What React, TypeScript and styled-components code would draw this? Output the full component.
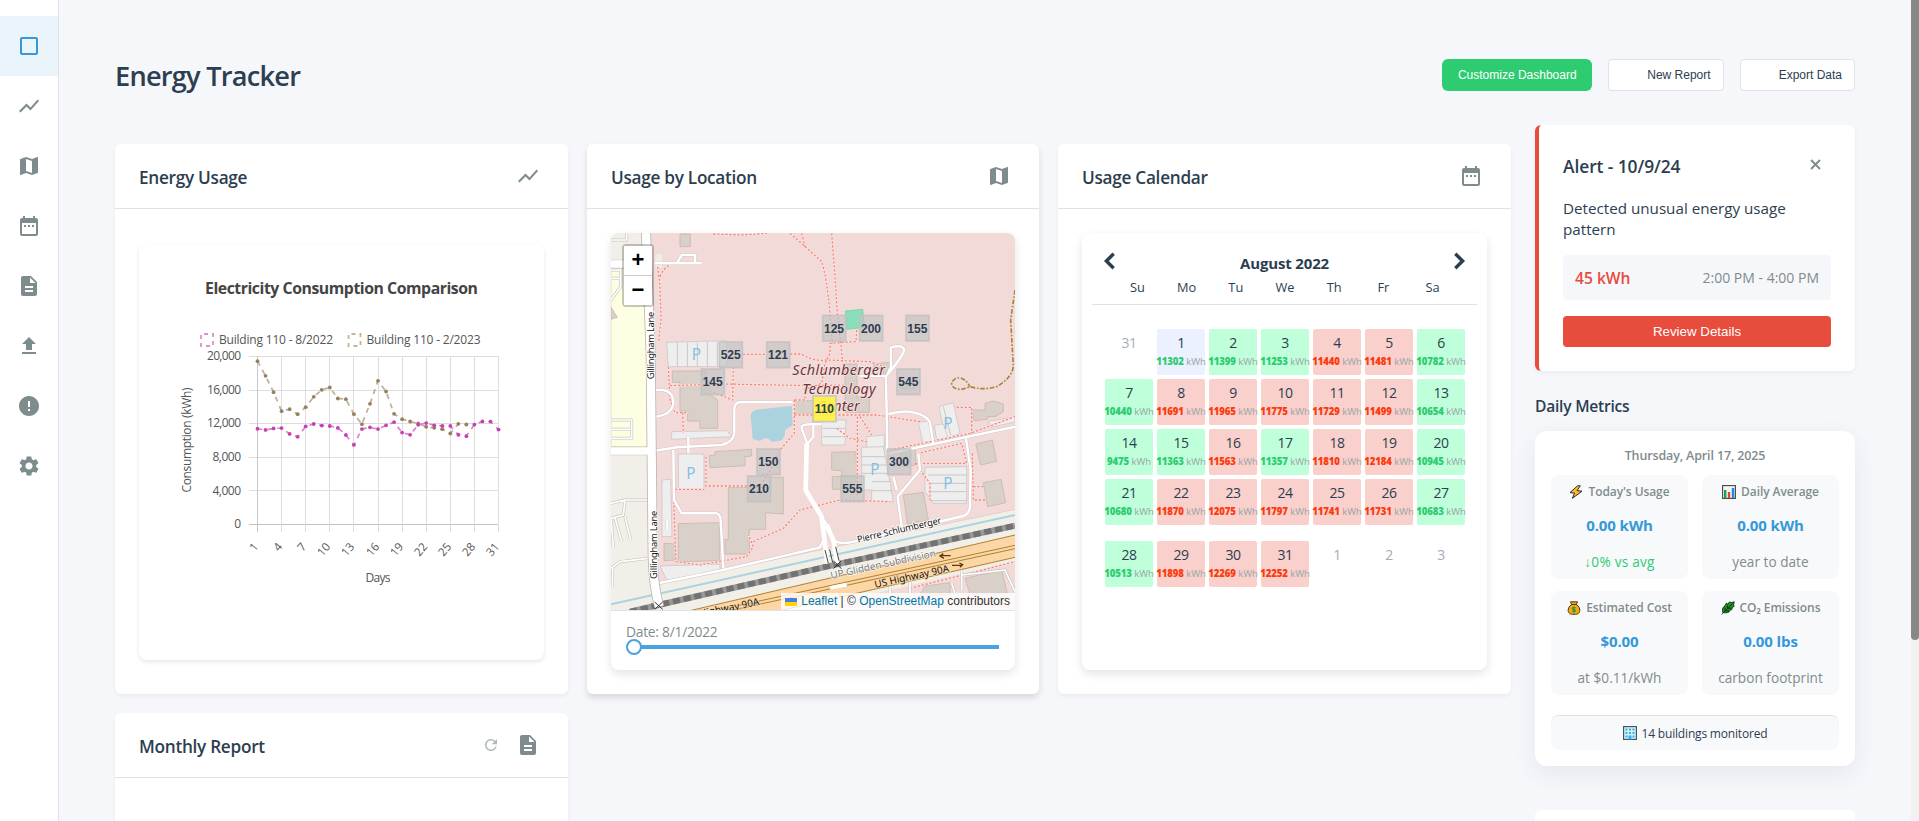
import React from "react";
import styled, { createGlobalStyle, css } from "styled-components";
import {
  MdCheckBoxOutlineBlank, MdShowChart, MdMap, MdDateRange, MdDescription,
  MdUpload, MdError, MdSettings, MdRefresh,
} from "react-icons/md";

const ui = '"Open Sans", "Noto Sans", sans-serif';
const arial = '"Liberation Sans", Arial, sans-serif';
const ink = "#2c3e50";
const muted = "#7f8c8d";
const line = "#dfe2e8";

const GlobalStyle = createGlobalStyle`
  * { box-sizing: border-box; }
  html, body { margin: 0; height: 821px; overflow: hidden; }
  body { background: #f5f7fb; font-family: ${ui}; color: ${ink}; }
  h1, h2, h3, p { margin: 0; }
  button { font-family: ${arial}; }
`;

const Page = styled.div`
  display: grid;
  grid-template-columns: 59px 1fr 8px;
  height: 821px;
  overflow: hidden;
`;

const Sidebar = styled.nav`
  background: #fff;
  border-right: 1px solid #dbe2ea;
  padding-top: 16px;
`;

const NavItem = styled.a<{ $active?: boolean }>`
  display: flex;
  align-items: center;
  justify-content: center;
  height: 60px;
  color: ${(p) => (p.$active ? "#3498db" : muted)};
  background: ${(p) => (p.$active ? "#e9f4fb" : "transparent")};
`;

const ScrollTrack = styled.div`
  background: #f1f1f1;
`;
const ScrollThumb = styled.div`
  height: 640px;
  background: #888;
  border-radius: 0 0 4px 4px;
`;

const Main = styled.main`
  padding: 59px 56px 0 56px;
  height: 821px;
  overflow: hidden;
`;

const TopBar = styled.header`
  display: flex;
  align-items: center;
  justify-content: space-between;
  height: 32px;
  margin-bottom: 34px;
`;
const PageTitle = styled.h1`
  padding-top: 2px;
  font-size: 27.2px;
  font-weight: 600;
  line-height: 38px;
  letter-spacing: -0.76px;
`;
const Actions = styled.div`
  display: flex;
  gap: 16px;
`;
const ActionButton = styled.button<{ $primary?: boolean }>`
  height: 32px;
  font-size: 12px;
  border-radius: 4px;
  white-space: nowrap;
  ${(p) =>
    p.$primary
      ? css`width: 150px; padding: 0; border: 0; border-radius: 6px; background: #2ecc71; color: #fff;`
      : css`padding: 0 12px 0 38px; border: 1px solid ${line}; background: #fff; color: ${ink};`}
`;

const Columns = styled.div`
  display: flex;
  gap: 24px;
`;
const CardGrid = styled.section`
  display: grid;
  grid-template-columns: 453px 452px 453px;
  grid-auto-rows: 550px;
  gap: 19px;
  padding-top: 19px;
`;
const Card = styled.article<{ $raised?: boolean }>`
  display: flex;
  flex-direction: column;
  background: #fff;
  border-radius: 6px;
  box-shadow: ${(p) => (p.$raised ? "0 4px 6px rgba(0,0,0,.12)" : "0 2px 4px rgba(0,0,0,.05)")};
`;
const CardHeader = styled.header`
  display: flex;
  align-items: center;
  height: 65px;
  padding: 0 28px 0 24px;
  border-bottom: 1px solid ${line};
`;
const CardTitle = styled.h2`
  flex: 1;
  padding-top: 3px;
  font-size: 17.2px;
  font-weight: 600;
  line-height: 24px;
  letter-spacing: -0.28px;
`;
const HeaderIcons = styled.div`
  display: flex;
  align-items: center;
  gap: 16px;
  color: ${muted};
  & svg:first-child:not(:last-child) { opacity: 0.6; }
`;
const CardBody = styled.div`
  flex: 1;
  display: flex;
  padding: 24px;
`;
const Panel = styled.div<{ $inset?: boolean }>`
  flex: 1;
  display: flex;
  flex-direction: column;
  overflow: hidden;
  margin: ${(p) => (p.$inset ? "11px 0 10px" : "0")};
  border-radius: 8px;
  background: #fff;
  box-shadow: ${(p) => (p.$inset ? "0 2px 4px rgba(0,0,0,.1)" : "0 4px 10px rgba(0,0,0,.11)")};
`;

/* ---------- Chart ---------- */

const year22 = [11399, 11253, 11440, 11481, 10782, 10440, 11691, 11965, 11775, 11729, 11499, 10654, 9475, 11363, 11563, 11357, 11810, 12184, 10945, 10680, 11870, 12075, 11797, 11741, 11731, 10683, 10513, 11898, 12269, 12252, 11302];
const year23 = [19444, 17700, 15754, 13492, 13730, 13135, 13968, 15198, 16032, 16310, 15000, 14921, 13135, 11944, 14365, 17103, 15833, 13175, 12540, 12262, 12024, 11627, 11508, 11349, 10833, 11984, 11905];

const ChartSvg = styled.svg`
  display: block;
  font-family: ${ui};
  font-size: 12px;
  fill: #555;
`;
const px = (i: number) => 118.5 + i * 8.034;
const py = (v: number) => 280.5 - (v / 20000) * 168;

function Series({ data, dot, stroke }: { data: number[]; dot: string; stroke: string }) {
  return (
    <g>
      <polyline points={data.map((v, i) => `${px(i)},${py(v)}`).join(" ")} fill="none" stroke={stroke} strokeWidth={1.7} strokeDasharray="5 5" />
      {data.map((v, i) => <circle key={i} cx={px(i)} cy={py(v)} r={1.9} fill={dot} />)}
    </g>
  );
}

function Chart() {
  return (
    <ChartSvg width="405" height="416" viewBox="0 0 405 416">
      <text x="202.5" y="50" textAnchor="middle" fontSize="15.8" fontWeight="700" fill="#444" textLength="273">Electricity Consumption Comparison</text>
      <rect x="62" y="90" width="12" height="12" fill="none" stroke="#dd8fd0" strokeWidth="1.8" strokeDasharray="4 4" strokeDashoffset="-3" />
      <text x="80" y="99.7" textLength="114">Building 110 - 8/2022</text>
      <rect x="209.5" y="90" width="12" height="12" fill="none" stroke="#c4b49a" strokeWidth="1.8" strokeDasharray="4 4" strokeDashoffset="-3" />
      <text x="227.5" y="99.7" textLength="114">Building 110 - 2/2023</text>
      {[0, 4000, 8000, 12000, 16000, 20000].map((v) => (
        <g key={v}>
          <line x1="110" x2="360" y1={Math.floor(py(v)) + 0.5} y2={Math.floor(py(v)) + 0.5} stroke={v ? "#dedede" : "#c4c4c4"} />
          <text x="102" y={py(v) + 3.6} textAnchor="end" textLength={v === 0 ? 6.5 : v < 9000 ? 28.5 : 34}>{v.toLocaleString("en-US")}</text>
        </g>
      ))}
      {[1, 4, 7, 10, 13, 16, 19, 22, 25, 28, 31].map((d) => {
        const x = Math.floor(px(d - 1)) + 0.5;
        return (
          <g key={d}>
            <line x1={x} x2={x} y1="112" y2="288" stroke={d === 1 ? "#c8c8c8" : "#dedede"} />
            <text transform={`translate(${x + 1.5} 303) rotate(-50)`} textAnchor="end" fontSize="11.5">{d}</text>
          </g>
        );
      })}
      <Series data={year23} dot="#96805f" stroke="#bfae96" />
      <Series data={year22} dot="#c540b2" stroke="#d983cb" />
      <text x="239" y="338" textAnchor="middle" textLength="25">Days</text>
      <text transform="translate(52 196) rotate(-90)" textAnchor="middle" textLength="105">Consumption (kWh)</text>
    </ChartSvg>
  );
}

/* ---------- Map ---------- */

const MapArea = styled.div`
  position: relative;
  height: 377px;
`;
const MapSvg = styled.svg`
  display: block;
  width: 100%;
  height: 377px;
  font-family: "Noto Sans", sans-serif;
`;
const ZoomControl = styled.div`
  position: absolute;
  left: 11px;
  top: 11px;
  width: 32px;
  border: 2px solid rgba(0, 0, 0, 0.22);
  border-radius: 4px;
  background-clip: padding-box;
`;
const ZoomButton = styled.div`
  height: 29px;
  background: #fff;
  color: #000;
  font: bold 22px/27px ${arial};
  text-align: center;
  & + & { height: 30px; border-top: 1px solid #ccc; }
`;
const Attribution = styled.div`
  position: absolute;
  right: 0;
  bottom: 0;
  display: flex;
  align-items: center;
  height: 17px;
  padding: 0 5px 0 4px;
  background: rgba(255, 255, 255, 0.8);
  font: 12px/17px ${arial};
  color: #333;
  white-space: pre;
  & a { color: #0078a8; }
  & svg { margin-right: 4px; }
`;

const buildings = [
  "240,42 271,42 271,80 240,80",
  "217,453 317,453 317,485 330,485 330,525 353,540 353,625 300,625 300,603 263,603 263,573 240,573 240,487 217,487",
  "585,542 640,542 640,583 585,583",
  "735,432 771,432 771,532 808,532 808,577 735,577",
  "822,432 868,427 868,450 852,465 848,446 822,444",
  "905,487 945,487 945,507 905,507",
  "1117,570 1155,570 1155,550 1180,543 1210,552 1210,575 1185,590 1162,590 1162,598 1122,602",
  "1127,672 1177,660 1190,724 1142,735",
  "33,262 52,292 33,298",
  "345,695 455,688 455,708 435,710 435,737 330,743 328,707 345,705",
  "385,802 510,802 510,772 550,772 550,882 497,878 497,928 448,928 448,1002 375,1002 375,958 385,958",
  "235,911 358,908 358,1022 235,1025",
  "192,970 225,972 225,1020 192,1022",
  "695,697 768,695 772,808 697,808 697,770 725,768 725,752 695,750",
  "910,825 970,817 985,900 922,912",
  "1150,788 1203,778 1217,848 1163,860",
  "900,690 945,688 948,735 910,740",
  "975,1098 1050,1088 1050,1125 960,1125",
  "1095,1075 1205,1050 1222,1120 1110,1122",
];
const parkings = [
  "200,367 380,362 380,440 205,440",
  "1017,560 1060,548 1080,640 1037,655",
  "955,607 985,603 1003,668 970,675",
  "1003,615 1030,612 1045,655 1010,662",
  "665,600 738,600 735,675 665,675",
  "800,650 853,645 853,680 800,690",
  "215,635 380,632 397,650 215,658",
  "235,702 312,702 312,810 235,808",
  "785,682 850,680 865,760 880,845 815,845 815,810 785,810",
  "975,742 1100,740 1100,850 1000,850 975,815",
  "186,780 212,778 216,950 186,950",
  "180,1038 360,1032 360,1055 200,1080",
  "1165,604 1245,590 1245,606 1172,622",
];
const whiteRoads = [
  "M165,130 H305 M232,128 L245,105 H285 V128",
  "M165,510 H190 Q220,515 220,550 Q215,585 165,590",
  "M578,547 H418 Q403,550 403,570 V640 Q400,665 365,675 L230,682 L165,692",
  "M780,468 H860 M862,690 L858,468 Q905,415 913,390 Q908,372 872,382 L873,440 L860,468",
  "M865,582 Q900,572 930,575 Q985,585 990,610 L1000,670",
  "M860,702 L1000,672 L1245,620",
  "M605,625 Q600,612 640,613 H665 M605,625 L622,672 M640,613 V650 L622,672",
  "M620,670 L617,810 Q640,850 665,890 L682,1030 M665,890 Q690,925 700,960 L710,1030 M672,950 Q665,985 650,985 M700,960 Q720,975 760,965",
  "M760,965 L1090,888 Q1112,880 1110,850 L1112,750 L1098,655",
  "M175,1090 L370,1050 L650,985",
  "M905,920 L893,830 L960,750 L955,700 M880,770 L890,810",
  "M220,690 L222,840 L245,880 H350 Q362,885 362,900 L370,1045",
  "M265,650 V700 M202,900 V930",
];
const thinRoads = [
  "M33,850 L75,840 H145 M75,840 L70,885 L33,895 M45,895 L65,965 M75,890 L92,960 M33,895 L40,980",
  "M33,1045 L60,1025 L145,1015 M38,1045 L37,1100",
  "M33,60 H80 V39 M33,150 H62 V200 L33,240 M33,175 H60 M33,600 H95 V655 H33 M33,628 H92",
  "M1085,1050 V1110 M1085,1065 L1215,1050 L1245,1115 M930,1085 V1120 M870,1100 V1120 M1055,1090 L1065,1120",
];
const footpaths = [
  "M173,140 L180,200 L183,300 L176,362 M180,170 Q190,145 210,135",
  "M340,42 L430,45 L500,40 M570,40 L610,75 L665,125 Q680,170 690,280 L697,370",
  "M695,40 L705,170 L712,280 L720,350 L728,425 M605,40 L615,80",
  "M428,403 H500 M570,402 H605 Q640,425 680,420 L810,425 L850,440",
  "M770,330 L768,365 L690,370 V400 L675,430 L665,490 L610,510",
  "M210,497 L370,492 L640,497 L730,495",
  "M205,440 L210,540 L225,578 H263 M248,578 L250,640 M400,440 L398,540 L320,510",
  "M583,540 V640 L540,690 M583,585 L830,585 L960,605 M583,540 H615 V510",
  "M772,590 V830 M780,590 L815,645 M710,625 L750,655 L800,665",
  "M870,690 L1110,640 L1245,590 M1070,562 H1115 V640",
  "M318,710 V798 H470 M225,808 L312,808 M220,820 L228,1025 L300,1035 L440,1010 L460,980 L445,945",
  "M460,965 L550,925 L600,870 L720,840 L870,845 M480,795 Q510,760 535,700",
  "M945,730 H1100 L1085,670 L955,700 M1117,700 L1120,840 H1155 M1120,800 H1150 M945,730 L990,790 V840",
  "M930,1105 L1245,1025",
];
const markers: [string, number, number][] = [
  ["125", 702, 325], ["200", 813, 325], ["155", 952, 325], ["525", 392, 405], ["121", 534, 405],
  ["145", 338, 486], ["545", 925, 486], ["110", 673, 567], ["150", 505, 726], ["300", 897, 726],
  ["210", 477, 807], ["555", 757, 807],
];
const railway = "M90,1175 L175,1155 L710,1033 L1245,917";
const rowLines = "M232,368 V440 M262,368 V440 M292,368 V440 M322,366 V440 M352,366 V440 M668,625 H735 M668,650 H735 M785,710 H855 M785,735 H860 M785,760 H866 M815,785 H872 M815,812 H877 M985,765 H1100 M985,790 H1100 M985,815 H1100 M990,842 H1100 M1030,560 L1052,645";

function CampusMap() {
  return (
    <MapSvg viewBox="33 39 1212 1131" preserveAspectRatio="none">
      <rect x="33" y="39" width="1212" height="1131" fill="#f2dad9" />
      <path d="M33,39 H135 L150,700 H33Z" fill="#f2efe9" />
      <path d="M33,145 H137 L142,680 H33Z" fill="#feffe2" stroke="#cfcf9c" strokeWidth="2" />
      <rect x="165" y="100" width="22" height="45" fill="#f0ebe3" stroke="#dcd3c8" />
      <path d="M33,700 H150 L170,1092 L1245,868 V1170 H33Z" fill="#f2efe9" />
      <path d="M170,1092 L1245,868" stroke="#dcc3c0" strokeWidth="2" />
      <path d="M780,1130 L1245,1025 V1170 H700Z" fill="#f2dad9" />
      <path d="M33,1153 L1245,885" stroke="#aad3df" strokeWidth="6" />
      <path d="M270,1172 L1245,945 V1012 L540,1172Z" fill="#fcd6a4" />
      <path d="M270,1172 L1245,945 M345,1172 L1245,976 M390,1172 L1245,986 M540,1172 L1245,1012" stroke="#b08030" strokeWidth="3" fill="none" />
      <path d="M690,1104 L740,1094" stroke="#fff" strokeWidth="11" />
      <path d={railway} stroke="#999" strokeWidth="18" fill="none" />
      <path d={railway} stroke="#727272" strokeWidth="17" strokeDasharray="22 11" fill="none" />
      <path d="M452,585 Q455,570 480,568 L575,558 L578,615 L555,630 Q557,655 540,662 L515,666 Q500,645 480,663 L458,657Z" fill="#aad3df" />
      {parkings.map((p) => <polygon key={p} points={p} fill="#eeeeee" stroke="#cfc6c6" strokeWidth="2.5" />)}
      <path d={rowLines} stroke="#c8c8c8" strokeWidth="3" fill="none" />
      {buildings.map((p) => <polygon key={p} points={p} fill="#d9d0c9" stroke="#c6b9ab" strokeWidth="2.5" />)}
      <g fill="none" strokeLinejoin="round">
        {footpaths.map((d) => <path key={d} d={d} stroke="#f7e8e6" strokeWidth="6" />)}
        {footpaths.map((d) => <path key={d} d={d} stroke="#fa8478" strokeWidth="3.8" strokeDasharray="7 5" />)}
        {thinRoads.map((d) => <path key={d} d={d} stroke="#c9c5c0" strokeWidth="9" />)}
        {thinRoads.map((d) => <path key={d} d={d} stroke="#fff" strokeWidth="5" />)}
        {whiteRoads.map((d) => <path key={d} d={d} stroke="#cfc0c0" strokeWidth="10" />)}
        {whiteRoads.map((d) => <path key={d} d={d} stroke="#fff" strokeWidth="7.5" />)}
        <path d="M33,132 H150 M33,693 H155" stroke="#c8c4bf" strokeWidth="26" />
        <path d="M138,39 L152,400 L158,1000 Q160,1100 178,1160" stroke="#bdb6b3" strokeWidth="30" />
        <path d="M33,132 H150 M33,693 H155" stroke="#fff" strokeWidth="22" />
        <path d="M138,39 L152,400 L158,1000 Q160,1100 178,1160" stroke="#fff" strokeWidth="25" />
        <path d="M620,670 L617,810 Q640,850 665,890 L682,1030 M680,915 L700,960 L712,1030" stroke="#fff" strokeWidth="14" />
        <path d="M675,990 L685,1030 M689,988 L698,1028 M707,980 L717,1022" stroke="#444" strokeWidth="3" />
        <path d="M1245,210 L1232,300 L1240,440 Q1235,475 1190,500 Q1150,512 1110,500 Q1070,518 1055,495 Q1055,475 1080,473 Q1100,480 1110,500" stroke="#ab8436" strokeWidth="5" strokeDasharray="14 5 5 5" />
      </g>
      <path d="M700,1022 L724,1046 M724,1022 L700,1046 M164,1146 L188,1168 M188,1146 L164,1168" stroke="#333" strokeWidth="3" />
      <path d="M1052,1007 H1022 M1030,1001 L1020,1008 L1032,1015 M1056,1036 H1086 M1078,1029 L1088,1034 L1080,1042" stroke="#5a3c0a" strokeWidth="4" fill="none" />
      <polygon points="736,273 788,268 793,322 741,328" fill="#8adfbb" stroke="#70d3a8" strokeWidth="2.5" />
      <g fill="#85bfe2" fontSize="46" textAnchor="middle">
        <text x="289" y="419">P</text><text x="1044" y="628">P</text><text x="273" y="778">P</text>
        <text x="825" y="766">P</text><text x="1044" y="808">P</text>
      </g>
      <g fill="#111" fontSize="28" stroke="#fff" strokeWidth="5" paintOrder="stroke">
        <text transform="translate(161 478) rotate(-90)" textLength="203">Gillingham Lane</text>
        <text transform="translate(171 1077) rotate(-90)" textLength="205">Gillingham Lane</text>
        <text transform="translate(774 968) rotate(-13)" textLength="258">Pierre Schlumberger</text>
        <text transform="translate(694 1077) rotate(-12.2)" fontSize="30" textLength="322" fill="#777" strokeWidth="3.5">UP Glidden Subdivision</text>
        <text transform="translate(826 1104) rotate(-12.5)" fontSize="30" textLength="228" stroke="#fcd6a4">US Highway 90A</text>
        <text transform="translate(300 1191) rotate(-11.5)" fontSize="30" textLength="183" stroke="#fcd6a4">Highway 90A</text>
      </g>
      <g fill="#6d3437" fontSize="43" fontStyle="italic" stroke="#f6e6e5" strokeWidth="4" paintOrder="stroke">
        <text x="577" y="466" textLength="278">Schlumberger</text>
        <text x="607" y="521" textLength="220">Technology</text>
        <text x="652" y="574" textLength="127">Center</text>
      </g>
      {markers.map(([n, x, y]) => (
        <g key={n}>
          <rect x={x - 34} y={y - 39} width="69" height="77" fill={n === "110" ? "#fff33b" : "#c3c3c3"} fillOpacity={n === "110" ? 0.88 : 0.66} stroke="#bfc0c2" strokeOpacity="0.8" strokeWidth="5" />
          <text x={x} y={y + 13} textAnchor="middle" fontFamily="Liberation Sans" fontWeight="700" fontSize="36" fill={ink}>{n}</text>
        </g>
      ))}
    </MapSvg>
  );
}

const SliderArea = styled.div`
  flex: 1;
  padding: 12px 16px 0 15px;
  border-top: 1px solid ${line};
`;
const SliderLabel = styled.div`
  font-size: 13.8px;
  line-height: 18px;
  letter-spacing: -0.25px;
  color: ${muted};
`;
const Slider = styled.div`
  display: flex;
  align-items: center;
  height: 16px;
  margin-top: -2px;
`;
const Thumb = styled.span`
  width: 16px;
  height: 16px;
  border: 2px solid #4aa3df;
  border-radius: 50%;
  background: #fff;
`;
const Rail = styled.span`
  flex: 1;
  height: 4px;
  margin-left: -1px;
  background: #4aa3df;
`;

/* ---------- Calendar ---------- */

const CalHeader = styled.div`
  margin: 0 10px;
  padding: 20px 0 7px;
  border-bottom: 1px solid ${line};
`;
const MonthRow = styled.div`
  display: flex;
  justify-content: space-between;
  align-items: center;
  height: 20px;
  padding: 0 11px;
  margin-bottom: 4px;
  & svg { margin-top: -4px; }
`;
const Month = styled.div`
  font-size: 15px;
  font-weight: 700;
  line-height: 20px;
  letter-spacing: -0.16px;
`;
const WeekNames = styled.div`
  display: flex;
  justify-content: center;
  padding-left: 1px;
`;
const WeekName = styled.span`
  width: 49.2px;
  text-align: center;
  font-size: 12.8px;
  font-weight: 500;
  line-height: 20px;
`;
const Weeks = styled.div`
  padding: 24px 0 0 23px;
`;
const Week = styled.div`
  display: grid;
  grid-template-columns: repeat(7, 48px);
  gap: 4px;
  margin-bottom: 4px;
  &:last-child { margin-top: 16px; }
`;
type Tone = "out" | "sel" | "low" | "high";
const tones: Record<Tone, string> = { out: "transparent", sel: "#ebf1fe", low: "#bfffda", high: "#f9d0cc" };
const Day = styled.div<{ $tone: Tone }>`
  display: flex;
  flex-direction: column;
  align-items: center;
  height: 46px;
  padding-top: 5px;
  border-radius: 2px;
  background: ${(p) => tones[p.$tone]};
  color: ${(p) => (p.$tone === "out" ? "#a5aeb6" : ink)};
`;
const DayNumber = styled.span`
  font-size: 14px;
  font-weight: 500;
  line-height: 18px;
  letter-spacing: -0.4px;
`;
const Usage = styled.span<{ $high: boolean }>`
  margin-top: 3px;
  font-size: 9.6px;
  line-height: 14px;
  letter-spacing: -0.12px;
  white-space: nowrap;
  color: #9aa5a6;
  & b { font-weight: 800; color: ${(p) => (p.$high ? "#fb3b0c" : "#2ecc71")}; }
`;

const august = [11302, 11399, 11253, 11440, 11481, 10782, 10440, 11691, 11965, 11775, 11729, 11499, 10654, 9475, 11363, 11563, 11357, 11810, 12184, 10945, 10680, 11870, 12075, 11797, 11741, 11731, 10683, 10513, 11898, 12269, 12252];

function Calendar() {
  const weeks = [0, 1, 2, 3, 4].map((w) => [0, 1, 2, 3, 4, 5, 6].map((d) => w * 7 + d));
  return (
    <>
      <CalHeader>
        <MonthRow>
          <svg width="13" height="18" viewBox="0 0 13 18"><path d="M10.7 1.7 L3.4 9 L10.7 16.3" fill="none" stroke={ink} strokeWidth="3.4" /></svg>
          <Month>August 2022</Month>
          <svg width="13" height="18" viewBox="0 0 13 18"><path d="M2.3 1.7 L9.6 9 L2.3 16.3" fill="none" stroke={ink} strokeWidth="3.4" /></svg>
        </MonthRow>
        <WeekNames>
          {["Su", "Mo", "Tu", "We", "Th", "Fr", "Sa"].map((n) => <WeekName key={n}>{n}</WeekName>)}
        </WeekNames>
      </CalHeader>
      <Weeks>
        {weeks.map((week) => (
          <Week key={week[0]}>
            {week.map((n) => {
              const kwh = august[n - 1];
              if (n < 1 || n > 31) return <Day key={n} $tone="out"><DayNumber>{n < 1 ? 31 : n - 31}</DayNumber></Day>;
              const high = kwh > 11400;
              return (
                <Day key={n} $tone={n === 1 ? "sel" : high ? "high" : "low"}>
                  <DayNumber>{n}</DayNumber>
                  <Usage $high={high}><b>{kwh}</b> kWh</Usage>
                </Day>
              );
            })}
          </Week>
        ))}
      </Weeks>
    </>
  );
}

/* ---------- Right column ---------- */

const Aside = styled.aside`
  width: 320px;
`;
const AlertCard = styled.section`
  height: 246px;
  padding: 29px 24px 24px;
  border-left: 4px solid #e74c3c;
  border-radius: 6px;
  background: #fff;
  box-shadow: 0 2px 4px rgba(0, 0, 0, 0.05);
`;
const AlertTop = styled.div`
  display: flex;
  justify-content: space-between;
  height: 24px;
  margin-bottom: 20px;
`;
const AlertTitle = styled.h3`
  font-size: 17.4px;
  font-weight: 600;
  line-height: 24px;
  letter-spacing: -0.08px;
`;
const CloseIcon = styled.svg`
  margin: 5px 10px 0 0;
`;
const AlertText = styled.p`
  font-size: 15.2px;
  line-height: 21px;
  margin-bottom: 15px;
`;
const AlertFacts = styled.div`
  display: flex;
  align-items: center;
  justify-content: space-between;
  height: 45px;
  padding: 0 12px;
  margin-bottom: 16px;
  border-radius: 4px;
  background: #f5f7fb;
`;
const AlertAmount = styled.span`
  font-size: 15.6px;
  font-weight: 600;
  color: #e74c3c;
`;
const AlertTime = styled.span`
  font-size: 14px;
  color: ${muted};
`;
const ReviewButton = styled.button`
  display: block;
  width: 100%;
  height: 31px;
  border: 0;
  border-radius: 4px;
  background: #e74c3c;
  color: #fff;
  font-size: 13.33px;
`;
const SectionTitle = styled.h2`
  margin: 24px 0 14px;
  font-size: 15.6px;
  font-weight: 600;
  line-height: 22px;
  letter-spacing: -0.24px;
`;
const MetricsCard = styled.section`
  height: 335px;
  padding: 15px 16px 16px;
  border-radius: 12px;
  background: #fff;
  box-shadow: 0 8px 24px rgba(40, 50, 70, 0.08);
`;
const MetricsDate = styled.div`
  margin-bottom: 9px;
  text-align: center;
  font-size: 12.5px;
  font-weight: 600;
  line-height: 20px;
  letter-spacing: -0.14px;
  color: ${muted};
`;
const Tiles = styled.div`
  display: grid;
  grid-template-columns: 1fr 1fr;
  gap: 12px 14px;
`;
const Tile = styled.div`
  height: 104px;
  padding-top: 7px;
  border-radius: 8px;
  background: #f8f9fb;
  text-align: center;
  white-space: nowrap;
`;
const TileLabel = styled.div`
  display: flex;
  align-items: center;
  justify-content: center;
  gap: 5px;
  font-size: 12px;
  font-weight: 600;
  line-height: 20px;
  letter-spacing: -0.08px;
  color: ${muted};
`;
const TileValue = styled.div`
  margin-top: 11px;
  font-size: 15px;
  font-weight: 700;
  line-height: 24px;
  letter-spacing: -0.12px;
  color: #3498db;
`;
const TileNote = styled.div<{ $good?: boolean }>`
  margin-top: 15px;
  font-size: 13.6px;
  line-height: 20px;
  font-weight: ${(p) => (p.$good ? 500 : 400)};
  letter-spacing: ${(p) => (p.$good ? "0.25px" : "0.03px")};
  color: ${(p) => (p.$good ? "#2ecc71" : muted)};
`;
const MetricsFooter = styled.div`
  display: flex;
  align-items: center;
  justify-content: center;
  gap: 5px;
  height: 35px;
  margin-top: 20px;
  border-top: 1px solid #dfe3e7;
  border-radius: 8px;
  background: #f8f9fb;
  font-size: 12px;
  letter-spacing: -0.18px;
`;
const NextCard = styled.section`
  height: 200px;
  margin-top: 44px;
  border-radius: 6px;
  background: #fff;
`;

const Bolt = () => (
  <svg width="14" height="14" viewBox="0 0 14 14"><path d="M8.6 .8 L1 7.6 L5.6 8.2 L3.4 13.3 L13 6.2 L8 5.6 L11.3 .8Z" fill="#ffb92e" stroke="#2b2b2b" strokeWidth="1" /></svg>
);
const Bars = () => (
  <svg width="14" height="14" viewBox="0 0 14 14"><rect x=".6" y=".6" width="12.8" height="12.8" fill="#f4f4f4" stroke="#444" strokeWidth="1.1" /><path d="M2 5h2.4v8H2z" fill="#16a34a" /><path d="M5.8 7h2.4v6H5.8z" fill="#e5432f" /><path d="M9.8 3h2.4v10H9.8z" fill="#1e88e5" /></svg>
);
const MoneyBag = () => (
  <svg width="14" height="14" viewBox="0 0 14 14"><path d="M3.5 .8h7L9.3 3.6C12 5 13 7.5 12.8 9.8C12.6 12.2 11 13.4 7 13.4S1.4 12.2 1.2 9.8C1 7.5 2 5 4.7 3.6Z" fill="#f3a812" stroke="#3a2a10" strokeWidth=".9" /><path d="M4.5 3.5h5" stroke="#5a3a08" strokeWidth="1" /><path d="M8.6 6.7Q5.5 5.9 5.6 7.7T8.4 9.3Q8.5 11.1 5.4 10.5M7 5.4v6.3" stroke="#1a9b3c" strokeWidth="1.1" fill="none" /></svg>
);
const Leaf = () => (
  <svg width="14" height="14" viewBox="0 0 14 14"><path d="M1.8 11.5C.8 8 2 6 4 4.8L5 2.5L7 3L8.5 .9L10.5 1.6L13.2 .8L12.7 3.5L13 5.5L11 6.5L11 8.5L9 9L8 11C5.5 12 3.5 12 2.6 11.5Z" fill="#149127" stroke="#12330f" strokeWidth=".9" /><path d="M.8 13.5L11.5 2.5M4 10V6.5M6.5 7.5V4.5M4.5 9.8H8M7 7.3H10" stroke="#12330f" strokeWidth=".9" fill="none" /></svg>
);
const Office = () => (
  <svg width="14" height="14" viewBox="0 0 14 14"><rect x=".6" y=".6" width="12.8" height="12.8" fill="#d5eef8" stroke="#3f4a55" strokeWidth="1.1" /><path d="M2.5 2.5h2v2h-2zM6 2.5h2v2H6zM9.5 2.5h2v2h-2zM2.5 6h2v2h-2zM6 6h2v2H6zM9.5 6h2v2h-2zM2.5 9.5h2v2h-2zM9.5 9.5h2v2h-2zM5.5 9.5h3v4h-3z" fill="#2cb5e8" /></svg>
);

/* ---------- Page ---------- */

const navIcons = [MdCheckBoxOutlineBlank, MdShowChart, MdMap, MdDateRange, MdDescription, MdUpload, MdError, MdSettings];

export default function App() {
  return (
    <Page>
      <GlobalStyle />
      <Sidebar>
        {navIcons.map((Icon, i) => <NavItem key={i} $active={i === 0}><Icon size={24} /></NavItem>)}
      </Sidebar>
      <Main>
        <TopBar>
          <PageTitle>Energy Tracker</PageTitle>
          <Actions>
            <ActionButton $primary>Customize Dashboard</ActionButton>
            <ActionButton>New Report</ActionButton>
            <ActionButton>Export Data</ActionButton>
          </Actions>
        </TopBar>
        <Columns>
          <CardGrid>
            <Card>
              <CardHeader><CardTitle>Energy Usage</CardTitle><HeaderIcons><MdShowChart size={24} /></HeaderIcons></CardHeader>
              <CardBody><Panel $inset><Chart /></Panel></CardBody>
            </Card>
            <Card $raised>
              <CardHeader><CardTitle>Usage by Location</CardTitle><HeaderIcons><MdMap size={24} /></HeaderIcons></CardHeader>
              <CardBody>
                <Panel>
                  <MapArea>
                    <CampusMap />
                    <ZoomControl><ZoomButton>+</ZoomButton><ZoomButton>−</ZoomButton></ZoomControl>
                    <Attribution>
                      <svg width="12" height="8" viewBox="0 0 12 8"><path fill="#4c7be1" d="M0 0h12v4H0z" /><path fill="#ffd500" d="M0 4h12v4H0z" /></svg>
                      <a>Leaflet</a> | © <a>OpenStreetMap</a> contributors
                    </Attribution>
                  </MapArea>
                  <SliderArea>
                    <SliderLabel>Date: 8/1/2022</SliderLabel>
                    <Slider><Thumb /><Rail /></Slider>
                  </SliderArea>
                </Panel>
              </CardBody>
            </Card>
            <Card>
              <CardHeader><CardTitle>Usage Calendar</CardTitle><HeaderIcons><MdDateRange size={24} /></HeaderIcons></CardHeader>
              <CardBody><Panel><Calendar /></Panel></CardBody>
            </Card>
            <Card>
              <CardHeader><CardTitle>Monthly Report</CardTitle><HeaderIcons><MdRefresh size={18} /><MdDescription size={24} /></HeaderIcons></CardHeader>
            </Card>
          </CardGrid>
          <Aside>
            <AlertCard>
              <AlertTop>
                <AlertTitle>Alert - 10/9/24</AlertTitle>
                <CloseIcon width="11" height="11" viewBox="0 0 11 11"><path d="M1 1l9 9M10 1l-9 9" stroke={muted} strokeWidth="2" /></CloseIcon>
              </AlertTop>
              <AlertText>Detected unusual energy usage pattern</AlertText>
              <AlertFacts><AlertAmount>45 kWh</AlertAmount><AlertTime>2:00 PM - 4:00 PM</AlertTime></AlertFacts>
              <ReviewButton>Review Details</ReviewButton>
            </AlertCard>
            <SectionTitle>Daily Metrics</SectionTitle>
            <MetricsCard>
              <MetricsDate>Thursday, April 17, 2025</MetricsDate>
              <Tiles>
                <Tile><TileLabel><Bolt /><span>Today's Usage</span></TileLabel><TileValue>0.00 kWh</TileValue><TileNote $good>↓0% vs avg</TileNote></Tile>
                <Tile><TileLabel><Bars /><span>Daily Average</span></TileLabel><TileValue>0.00 kWh</TileValue><TileNote>year to date</TileNote></Tile>
                <Tile><TileLabel><MoneyBag /><span>Estimated Cost</span></TileLabel><TileValue>$0.00</TileValue><TileNote>at $0.11/kWh</TileNote></Tile>
                <Tile><TileLabel><Leaf /><span>CO₂ Emissions</span></TileLabel><TileValue>0.00 lbs</TileValue><TileNote>carbon footprint</TileNote></Tile>
              </Tiles>
              <MetricsFooter><Office /><span>14 buildings monitored</span></MetricsFooter>
            </MetricsCard>
            <NextCard />
          </Aside>
        </Columns>
      </Main>
      <ScrollTrack><ScrollThumb /></ScrollTrack>
    </Page>
  );
}
